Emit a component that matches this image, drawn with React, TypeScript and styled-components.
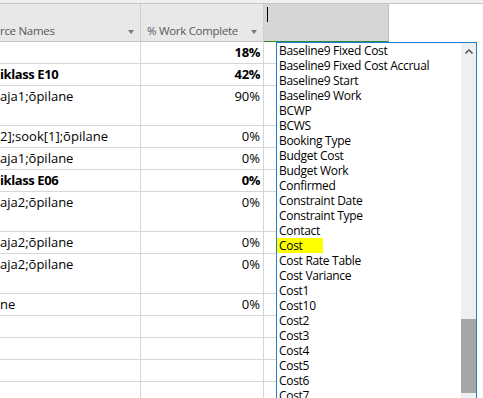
import React from 'react';
import styled, { createGlobalStyle } from 'styled-components';

const Global = createGlobalStyle`
  html, body { margin: 0; padding: 0; background: #fff; }
  body {
    width: 483px; height: 398px; overflow: hidden;
    font-family: "Segoe UI", "Open Sans", "Noto Sans", sans-serif;
  }
`;

const Page = styled.div`
  position: relative;
  width: 483px;
  height: 398px;
  overflow: hidden;
  background: #fff;
`;

const TopStrip = styled.div`
  height: 3px;
  background: #f0f0f0;
  border-bottom: 1px solid #c6c6c6;
`;

const HeaderRow = styled.div`
  display: flex;
  height: 38px;
`;

const HeaderCell = styled.div<{ $w?: number; $variant?: 'normal' | 'active' | 'blank' }>`
  display: flex;
  align-items: flex-end;
  box-sizing: border-box;
  flex: ${p => (p.$w ? `0 0 ${p.$w}px` : '1 1 auto')};
  padding: 0 6px 2px 6px;
  font-size: 11.5px;
  letter-spacing: -0.3px;
  color: #595959;
  white-space: nowrap;
  overflow: hidden;
  background: ${p => p.$variant === 'active' ? '#d6d6d6' : p.$variant === 'blank' ? '#fff' : '#e8e8e8'};
  border-right: ${p => p.$variant === 'blank' ? 'none' : p.$variant === 'active' ? '1px solid #c2c2c2' : '1px solid #cfcfcf'};
  border-bottom: 1px solid ${p => p.$variant === 'active' ? '#2f8a3c' : p.$variant === 'blank' ? 'transparent' : '#c4c4c4'};
`;

const HeaderLabel = styled.span<{ $clip?: boolean }>`
  flex: 1;
  line-height: 17px;
  margin-left: ${p => (p.$clip ? '-6px' : '0')};
`;

const SortArrow = styled.span`
  flex-shrink: 0;
  width: 0;
  height: 0;
  border-left: 3.5px solid transparent;
  border-right: 3.5px solid transparent;
  border-top: 4px solid #777;
  margin: 0 0 5px 4px;
`;

const Caret = styled.span`
  width: 1px;
  height: 15px;
  background: #000;
  align-self: flex-start;
  margin: 3px 0 0 -3px;
`;

const Row = styled.div<{ $tall?: boolean }>`
  display: flex;
  height: ${p => (p.$tall ? 40 : 22)}px;
`;

const Cell = styled.div<{ $w?: number; $align?: 'left' | 'right'; $bold?: boolean; $blank?: boolean }>`
  display: flex;
  justify-content: ${p => (p.$align === 'right' ? 'flex-end' : 'flex-start')};
  align-items: flex-start;
  box-sizing: border-box;
  flex: ${p => (p.$w ? `0 0 ${p.$w}px` : '1 1 auto')};
  border-right: ${p => (p.$blank ? 'none' : '1px solid #d6d6d6')};
  border-bottom: ${p => (p.$blank ? 'none' : '1px solid #d6d6d6')};
  font-size: 13px;
  line-height: 21px;
  color: #000;
  font-weight: ${p => (p.$bold ? 700 : 400)};
  letter-spacing: ${p => (p.$bold ? '-0.4px' : '0')};
  padding-right: ${p => (p.$align === 'right' ? '3px' : '0')};
  white-space: nowrap;
  overflow: hidden;
`;

const Dropdown = styled.div`
  position: absolute;
  left: 276px;
  top: 42px;
  width: 201px;
  height: 380px;
  box-sizing: border-box;
  border: 1px solid #1a7fd4;
  background: #fff;
  display: flex;
`;

const List = styled.div`
  flex: 1;
  display: flex;
  flex-direction: column;
  overflow: hidden;
`;

const Item = styled.div`
  height: 15px;
  line-height: 15px;
  font-size: 12px;
  letter-spacing: -0.3px;
  color: #000;
  white-space: nowrap;
  flex-shrink: 0;
`;

const ItemText = styled.span<{ $marked?: boolean }>`
  display: inline-block;
  padding-left: 2px;
  min-width: ${p => (p.$marked ? '46px' : '0')};
  box-sizing: border-box;
  background: ${p => (p.$marked ? '#ffff00' : 'transparent')};
`;

const ScrollBar = styled.div`
  width: 15px;
  background: #efefef;
  display: flex;
  flex-direction: column;
  align-items: center;
`;

const ScrollArrow = styled.svg`
  margin-top: 6px;
  flex-shrink: 0;
`;

const Thumb = styled.div`
  width: 15px;
  height: 74px;
  margin-top: 265px;
  flex-shrink: 0;
  background: #a6a6a6;
`;

const COL1 = 141;
const COL2 = 123;
const COL3 = 125;

const rows: { name: string; pct: string; bold?: boolean; tall?: boolean }[] = [
  { name: '', pct: '18%', bold: true },
  { name: 'iklass E10', pct: '42%', bold: true },
  { name: 'aja1;õpilane', pct: '90%', tall: true },
  { name: '2];sook[1];õpilane', pct: '0%' },
  { name: 'aja1;õpilane', pct: '0%' },
  { name: 'iklass E06', pct: '0%', bold: true },
  { name: 'aja2;õpilane', pct: '0%', tall: true },
  { name: 'aja2;õpilane', pct: '0%' },
  { name: 'aja2;õpilane', pct: '0%', tall: true },
  { name: 'ne', pct: '0%' },
  { name: '', pct: '' },
  { name: '', pct: '' },
  { name: '', pct: '' },
  { name: '', pct: '' },
];

const fields = [
  'Baseline9 Fixed Cost',
  'Baseline9 Fixed Cost Accrual',
  'Baseline9 Start',
  'Baseline9 Work',
  'BCWP',
  'BCWS',
  'Booking Type',
  'Budget Cost',
  'Budget Work',
  'Confirmed',
  'Constraint Date',
  'Constraint Type',
  'Contact',
  'Cost',
  'Cost Rate Table',
  'Cost Variance',
  'Cost1',
  'Cost10',
  'Cost2',
  'Cost3',
  'Cost4',
  'Cost5',
  'Cost6',
  'Cost7',
];

export default function App() {
  return (
    <Page>
      <Global />
      <TopStrip />
      <HeaderRow>
        <HeaderCell $w={COL1}>
          <HeaderLabel $clip>rce Names</HeaderLabel>
          <SortArrow />
        </HeaderCell>
        <HeaderCell $w={COL2}>
          <HeaderLabel>% Work Complete</HeaderLabel>
          <SortArrow />
        </HeaderCell>
        <HeaderCell $w={COL3} $variant="active">
          <Caret />
        </HeaderCell>
        <HeaderCell $variant="blank" />
      </HeaderRow>
      {rows.map((r, i) => (
        <Row key={i} $tall={r.tall}>
          <Cell $w={COL1} $bold={r.bold}>{r.name}</Cell>
          <Cell $w={COL2} $align="right" $bold={r.bold}>{r.pct}</Cell>
          <Cell $w={COL3} />
          <Cell $blank />
        </Row>
      ))}
      <Dropdown>
        <List>
          {fields.map(f => (
            <Item key={f}>
              <ItemText $marked={f === 'Cost'}>{f}</ItemText>
            </Item>
          ))}
        </List>
        <ScrollBar>
          <ScrollArrow width="8" height="5" viewBox="0 0 8 5">
            <path d="M0.5 4.5 L4 1 L7.5 4.5" fill="none" stroke="#606060" strokeWidth="1.6" />
          </ScrollArrow>
          <Thumb />
        </ScrollBar>
      </Dropdown>
    </Page>
  );
}
